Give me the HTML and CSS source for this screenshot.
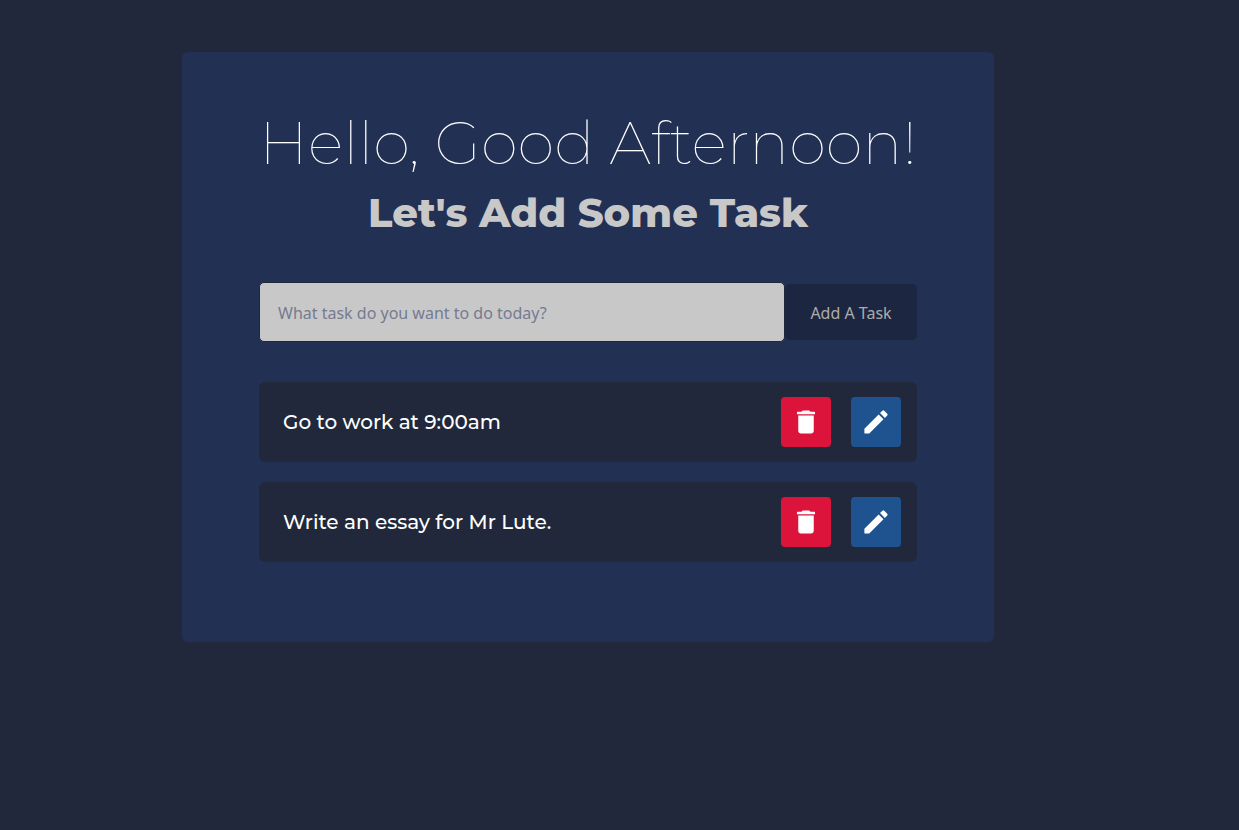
FILE: index.html
```html
<!DOCTYPE html>
<html lang="en">
<head>
<meta charset="utf-8">
<meta name="viewport" content="width=device-width, initial-scale=1">
<title>Task List</title>
<link rel="stylesheet" href="styles.css">
</head>
<body>
<svg class="sprite" aria-hidden="true">
  <symbol id="trash" viewBox="-0.4 -0.4 24.8 24.8"><path d="M6 19c0 1.100.9 2 2 2h8c1.100 0 2-.9 2-2V7H6v12zM5 4.500c0-.3.2-.5.5-.5h3l1-1h5l1 1h3c.3 0 .5.2.5.5V6H5z"/></symbol>
  <symbol id="pencil" viewBox="-0.4 -0.4 24.8 24.8"><path d="M3 17.250V20.500c0 .3.2.5.5.5H6.750L17.810 9.940l-3.750-3.750L3 17.250zM20.710 7.040a1 1 0 0 0 0-1.410l-2.340-2.340a1 1 0 0 0-1.410 0l-1.830 1.830 3.750 3.750 1.830-1.830z"/></symbol>
</svg>
<main class="card">
  <h1 class="greeting">Hello, Good Afternoon!</h1>
  <h2 class="subtitle">Let's Add Some Task</h2>
  <form class="task-form">
    <input class="task-input" type="text" aria-label="New task" placeholder="What task do you want to do today?">
    <button class="add-button" type="submit">Add A Task</button>
  </form>
  <ul class="task-list">
    <li class="task">
      <span class="task-name">Go to work at 9:00am</span>
      <button class="icon-button delete" type="button" aria-label="Delete task"><svg class="icon"><use href="#trash"/></svg></button>
      <button class="icon-button edit" type="button" aria-label="Edit task"><svg class="icon"><use href="#pencil"/></svg></button>
    </li>
    <li class="task">
      <span class="task-name">Write an essay for Mr Lute.</span>
      <button class="icon-button delete" type="button" aria-label="Delete task"><svg class="icon"><use href="#trash"/></svg></button>
      <button class="icon-button edit" type="button" aria-label="Edit task"><svg class="icon"><use href="#pencil"/></svg></button>
    </li>
  </ul>
</main>
</body>
</html>
```
FILE: styles.css
```css
* { box-sizing: border-box; }

body {
  margin: 0;
  padding: 52px 245px 52px 182px;
  min-height: 100vh;
  background: #22283b;
  color: #fff;
  font-family: Montserrat, Inter, sans-serif;
}

.sprite { display: none; }

.card {
  padding: 55px 77px 80px;
  border-radius: 6px;
  background: #223054;
}

.greeting {
  margin: 0;
  font-size: 60px;
  line-height: 72px;
  font-weight: 100;
  text-align: center;
  white-space: nowrap;
}

.subtitle {
  margin: 9px 0 45px;
  color: #c8c8c8;
  font-size: 40px;
  line-height: 49px;
  font-weight: 800;
  text-align: center;
}

.task-form {
  display: flex;
  align-items: center;
}

.task-input,
.add-button {
  border-radius: 5px;
  font-family: Tahoma, "Noto Sans", sans-serif;
  font-size: 16px;
}

.task-input {
  flex: 1;
  min-width: 0;
  height: 60px;
  padding: 2px 18px 0;
  border: 1px solid #22283b;
  background: #c8c8c8;
}

.task-input::placeholder { color: #757b91; opacity: 1; }

.add-button {
  height: 56px;
  width: 132px;
  padding: 2px 0 0;
  border: 0;
  background: #1d2641;
  color: #acacac;
}

.task-list {
  display: grid;
  gap: 20px;
  margin: 40px 0 0;
  padding: 0;
  list-style: none;
}

.task {
  display: flex;
  align-items: center;
  gap: 20px;
  min-height: 80px;
  padding: 15px 16px 15px 24px;
  border-radius: 6px;
  background: #22283b;
}

.task-name {
  flex: 1;
  font-size: 20px;
  line-height: 24px;
  font-weight: 500;
}

.icon-button {
  display: grid;
  place-items: center;
  width: 50px;
  height: 50px;
  padding: 0;
  border: 0;
  border-radius: 4px;
  color: #fff;
}

.delete { background: #dc143c; }
.edit { background: #1f5390; }

.icon {
  width: 32px;
  height: 32px;
  fill: currentColor;
}
```
